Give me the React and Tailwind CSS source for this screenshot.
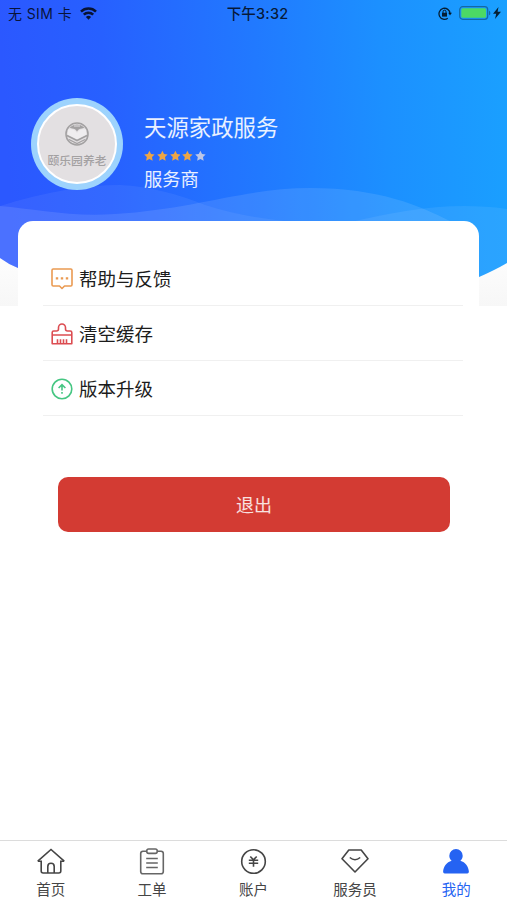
import React from 'react';

const STAR = 'M6 .2l1.8 3.7 4 .5-2.900 2.800.7 4.100L6 9.400l-3.600 1.900.7-4.100L.2 4.400l4-.5z';

function StatusBar() {
  return (
    <div className="grid grid-cols-3 items-center h-7 pl-2 pr-1.5 text-black/80">
      <div className="flex items-center gap-2">
        <span className="text-[14px] leading-7 tracking-[0.4px] whitespace-nowrap">无 SIM 卡</span>
        <svg className="w-[17px] h-[13px] -mt-0.5" viewBox="0 0 17 13" fill="none" stroke="currentColor" strokeWidth="2.5">
          <path d="M1 4.6a10.6 10.6 0 0 1 15 0" />
          <path d="M3.8 7.7a6.6 6.6 0 0 1 9.4 0" />
          <path d="M8.5 12.8L5.9 10.1a3.7 3.7 0 0 1 5.2 0z" fill="currentColor" stroke="none" />
        </svg>
      </div>
      <div className="text-center text-[14.5px] leading-7 font-medium tracking-[0.2px] pl-1.5">下午3:32</div>
      <div className="flex items-center justify-end -mt-0.5">
        <svg className="w-[14px] h-[13px] mr-[7px]" viewBox="0 0 14 13" fill="none" stroke="currentColor" strokeWidth="1.3">
          <path d="M9.8 11.2A5.5 5.5 0 1 1 12 6.5" />
          <path d="M10.200 5.800h3.700L12 8.500z" fill="currentColor" stroke="none" />
          <rect x="4" y="5.800" width="5" height="3.800" fill="currentColor" stroke="none" />
          <path d="M5 6V4.700a1.500 1.500 0 0 1 3 0V6" strokeWidth="1" />
        </svg>
        <svg className="w-[32px] h-[14px]" viewBox="0 0 32 14">
          <rect x=".7" y=".7" width="28" height="12.6" rx="3" fill="none" stroke="#1468a4" strokeWidth="1.2" />
          <rect x="2.3" y="2.3" width="24.8" height="9.4" rx="1.5" fill="#4cd964" />
          <path d="M30 4.7c1.8.7 1.800 3.900 0 4.600z" fill="#1468a4" />
        </svg>
        <svg className="w-[8px] h-[12px] ml-0.5" viewBox="0 0 8 12" fill="currentColor">
          <path d="M5.5 0L0 6.8h3.2L2 12l6-7.2H4.600z" />
        </svg>
      </div>
    </div>
  );
}

function Waves() {
  return (
    <svg className="absolute inset-0 w-full h-full" viewBox="0 0 507 306" preserveAspectRatio="none">
      <defs>
        <linearGradient id="sky" gradientUnits="userSpaceOnUse" x1="0" y1="40" x2="505" y2="10">
          <stop offset="0" stopColor="#2b58ff" />
          <stop offset=".2" stopColor="#2760ff" />
          <stop offset=".5" stopColor="#2179ff" />
          <stop offset=".75" stopColor="#1c90ff" />
          <stop offset="1" stopColor="#1aa0ff" />
        </linearGradient>
        <linearGradient id="foot" x1="0" y1="0" x2="0" y2="1">
          <stop offset="0" stopColor="#fff" />
          <stop offset="1" stopColor="#f7f7f7" />
        </linearGradient>
      </defs>
      <rect y="240" width="507" height="66" fill="url(#foot)" />
      <path d="M0 0H507V263Q495 270 479 277Q250 340 18 268Q8 264 0 258Z" fill="url(#sky)" />
      <path d="M0 206C45 192 85 185 120 185C150 186 180 195 205 205C235 215 265 219 300 223L300 300Q140 300 18 268Q8 264 0 258Z" fill="#fff" fillOpacity=".06" />
      <path d="M0 206C35 209 70 217 115 214C195 209 245 188 310 188C380 188 420 206 450 221L450 286Q230 330 18 268Q8 264 0 258Z" fill="#fff" fillOpacity=".1" />
      <path d="M355 221C400 211 450 201 507 209V263Q495 270 479 277L355 295Z" fill="#fff" fillOpacity=".07" />
    </svg>
  );
}

function Avatar() {
  return (
    <div className="flex items-center justify-center shrink-0 size-[92px] rounded-full bg-[#9dd3fd]">
      <div className="flex flex-col items-center size-20 rounded-full border-2 border-white bg-[#e3e0e2] pt-[16px] text-[#a3a1a2]">
        <svg className="size-6 shrink-0" viewBox="0 0 24 24" fill="none" stroke="currentColor">
          <circle cx="12" cy="12" r="11" strokeWidth="1.6" />
          <path d="M4.500 5.500Q12-.5 19.500 5.500L17 6.500Q13.500 6.500 12 9.500Q10.500 6.500 7 6.500Z" fill="currentColor" stroke="none" />
          <path d="M9 4h6" stroke="#e3e0e2" strokeWidth="1" />
          <path d="M3 7.500Q9.500 6 12 11Q14.500 6 21 7.500V13.500L12 18 3 13.500Z" fill="#efedef" stroke="none" />
          <path d="M2 13.500L12 18.500 22 13.500" strokeWidth="1.700" />
          <path d="M4 17.500L12 21.500 20 17.500" strokeWidth="1.200" />
        </svg>
        <span className="mt-[6px] text-[11.8px] leading-[18px] font-medium whitespace-nowrap">颐乐园养老</span>
      </div>
    </div>
  );
}

const menu = [
  {
    label: '帮助与反馈',
    icon: (
      <svg className="size-[22px] text-[#ea9a52]" viewBox="0 0 22 22" fill="none" stroke="currentColor" strokeWidth="1.6" strokeLinejoin="round">
        <path d="M2.200 1h17.600q1.200 0 1.200 1.200v14.600q0 1.200-1.200 1.200H13.500L11 20.500 8.500 18H2.200Q1 18 1 16.800V2.200Q1 1 2.200 1z" />
        <path d="M4.800 10.300h2.400M9.800 10.300h2.400M14.800 10.300h2.400" strokeWidth="2.2" />
      </svg>
    ),
  },
  {
    label: '清空缓存',
    icon: (
      <svg className="size-[22px] text-[#dc4d52]" viewBox="0 0 22 22" fill="none" stroke="currentColor" strokeWidth="1.6" strokeLinejoin="round">
        <path d="M2.700 8H5.500Q7.500 8 7.500 6V4.500a3.500 3.500 0 0 1 7 0V6Q14.500 8 16.500 8h2.800q1.500 0 1.500 1.500v11.300H1.200V9.500q0-1.500 1.500-1.500z" />
        <path d="M1.200 12h19.600M6.500 20.500v-4.200M9.500 20.500v-4.200M12.500 20.500v-4.200M15.500 20.500v-4.200" />
      </svg>
    ),
  },
  {
    label: '版本升级',
    icon: (
      <svg className="size-[22px] text-[#45c682]" viewBox="0 0 22 22" fill="none" stroke="currentColor" strokeWidth="1.6">
        <circle cx="11" cy="11" r="9.8" />
        <path d="M11 7v5.500M11 14v1.800M7.600 10L11 6.700l3.400 3.300" />
      </svg>
    ),
  },
];

const tabs = [
  {
    label: '首页',
    icon: (
      <>
        <path d="M.8 13.200L14 1.500l13.200 11.700" />
        <path d="M.8 13.200h3.400V23q0 2 2 2h15.600q2 0 2-2v-9.800h3.400" />
        <path d="M10.800 25v-6.500a3.200 3.200 0 0 1 6.400 0V25" />
      </>
    ),
  },
  {
    label: '工单',
    icon: (
      <g stroke="#666">
        <path d="M8.800 3.200H5q-2.300 0-2.300 2.300V23.500q0 2.300 2.300 2.300h18q2.300 0 2.300-2.300V5.500q0-2.300-2.300-2.300h-3.800" />
        <rect x="8.800" y="1" width="10.4" height="4.4" rx="1.8" />
        <path d="M8.200 10.500h11.600M8.200 15h11.600M8.200 19.500h11.600" />
      </g>
    ),
  },
  {
    label: '账户',
    icon: (
      <>
        <circle cx="14.5" cy="13.500" r="11.8" />
        <path d="M11.300 8.500l3.200 3.300 3.200-3.300M9.800 12.300h9.400M9.800 15.200h9.400M14.500 11.800v7" />
      </>
    ),
  },
  {
    label: '服务员',
    icon: (
      <>
        <path d="M7.800 2h12.400l6.800 8.700L14 24 1 10.700z" strokeLinejoin="round" />
        <path d="M8.800 9.500q5.200 4.500 10.400 0" />
      </>
    ),
  },
  {
    label: '我的',
    active: true,
    icon: (
      <path
        d="M14 1a6.700 6.700 0 0 1 6.700 6.700c0 2.100-.9 3.700-2.300 5 4.900 1.500 8.100 5.600 8.500 10.800q0 1.900-1.600 1.900H2.700q-1.600 0-1.600-1.900c.4-5.200 3.600-9.300 8.500-10.800-1.400-1.300-2.300-2.900-2.300-5A6.700 6.700 0 0 1 14 1z"
        fill="currentColor"
        stroke="none"
      />
    ),
  },
];

function TabBar() {
  return (
    <nav className="grid grid-cols-5 h-[60px] border-t border-[#dcdcdc] bg-white">
      {tabs.map((tab) => (
        <div
          key={tab.label}
          className={`flex flex-col items-center pt-[7px] ${tab.active ? 'text-[#2563f2]' : 'text-[#454545]'}`}
        >
          <svg className="w-7 h-[27px]" viewBox="0 0 28 27" fill="none" stroke="currentColor" strokeWidth="1.6">
            {tab.icon}
          </svg>
          <span className="mt-[5px] text-[14.5px] leading-[20px]">{tab.label}</span>
        </div>
      ))}
    </nav>
  );
}

export default function App() {
  return (
    <div className="flex flex-col w-full h-screen overflow-hidden bg-white font-['Inter','Noto_Sans_CJK_SC',sans-serif]">
      <header className="relative shrink-0 h-[306px]">
        <Waves />
        <div className="relative">
          <StatusBar />
          <div className="flex mt-[70px] ml-[31px]">
            <Avatar />
            <div className="ml-[21px] pt-[15px] text-white/90">
              <h1 className="text-[22.4px] leading-[30px]">天源家政服务</h1>
              <div className="flex gap-[2px] mt-[7px]">
                {[1, 2, 3, 4, 5].map((n) => (
                  <svg key={n} className={`w-[10.8px] h-[12px] ${n < 5 ? 'text-[#eda545]' : 'text-[#bcc6e6]'}`} viewBox="0 0 12 12" fill="currentColor">
                    <path d={STAR} />
                  </svg>
                ))}
              </div>
              <p className="mt-[4px] text-[18.3px] leading-[26px]">服务商</p>
            </div>
          </div>
        </div>
      </header>

      <main className="relative flex-1 mt-[-85px] ml-[18px] mr-[28px] pt-[30px] rounded-t-[15px] bg-white">
        <ul className="ml-[25px] mr-[16px]">
          {menu.map((item) => (
            <li key={item.label} className="flex items-center gap-[6px] h-[55px] pt-0.5 pl-2 border-b border-[#f0f0f0]">
              {item.icon}
              <span className="text-[18.5px] leading-[26px] text-[#1c1c1c]">{item.label}</span>
            </li>
          ))}
        </ul>
        <button className="block w-[392px] h-[55px] mt-[61px] ml-10 pt-0.5 rounded-[10px] bg-[#d33b33] text-[18px] text-white/85">
          退出
        </button>
      </main>

      <TabBar />
    </div>
  );
}
